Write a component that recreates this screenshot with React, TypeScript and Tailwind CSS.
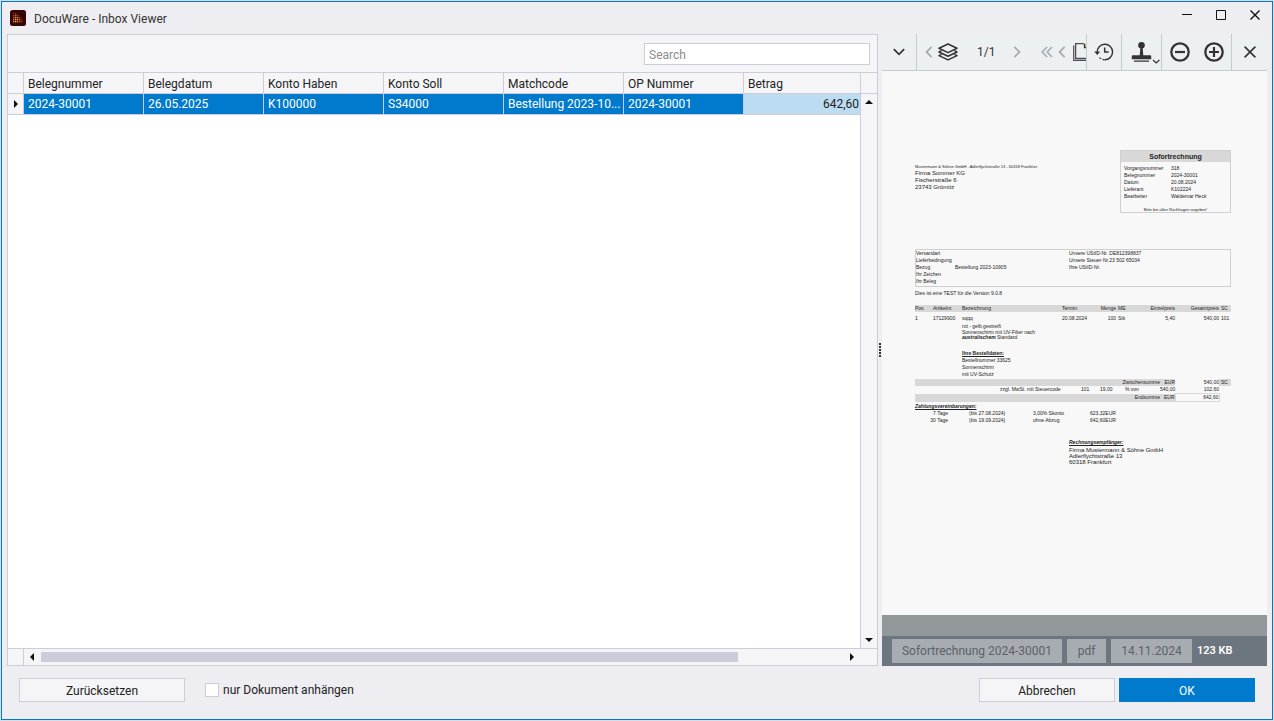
import React from "react";

const columns = ["Belegnummer", "Belegdatum", "Konto Haben", "Konto Soll", "Matchcode", "OP Nummer"];
const row = ["2024-30001", "26.05.2025", "K100000", "S34000", "Bestellung 2023-10...", "2024-30001"];

const meta = [
  ["Vorgangsnummer", "318"],
  ["Belegnummer", "2024-30001"],
  ["Datum", "20.08.2024"],
  ["Lieferant", "K102224"],
  ["Bearbeiter", "Waldemar Heck"],
];

const Logo = () => (
  <svg width="16" height="16" viewBox="0 0 16 16">
    <rect width="16" height="16" rx="2.5" fill="#360606" />
    {[
      [3, 3, "#7a2c10"], [5, 3, "#8f3a12"],
      [3, 5, "#a34a14"], [5, 5, "#d0701c"], [7, 5, "#a34a14"],
      [3, 7, "#b85a16"], [5, 7, "#f0a030"], [7, 7, "#e08a24"], [9, 7, "#a34a14"],
      [3, 9, "#d0701c"], [5, 9, "#f4b040"], [7, 9, "#f0a030"], [9, 9, "#c8681a"], [11, 9, "#7a2c10"],
      [3, 11, "#e08a24"], [5, 11, "#f0a030"], [7, 11, "#d0701c"], [9, 11, "#b85a16"], [11, 11, "#8f3a12"],
    ].map(([x, y, c]) => (
      <rect key={`${x}-${y}`} x={x} y={y} width="1.4" height="1.4" fill={c as string} />
    ))}
  </svg>
);

const TitleBar = () => (
  <header className="flex h-8 shrink-0 items-center pl-2 pr-3">
    <Logo />
    <h1 className="ml-2 flex-1 pt-px text-[12px] leading-4 text-[#333]">DocuWare - Inbox Viewer</h1>
    <div className="mb-1.5 flex gap-6">
      <button aria-label="Minimieren">
        <svg width="10" height="10" viewBox="0 0 10 10"><path d="M0 4.5h10" stroke="#111" /></svg>
      </button>
      <button aria-label="Maximieren">
        <svg width="10" height="10" viewBox="0 0 10 10"><path d="M.5.5h9v9h-9z" fill="none" stroke="#111" /></svg>
      </button>
      <button aria-label="Fenster schließen">
        <svg width="10" height="10" viewBox="0 0 10 10"><path d="M.5.5l9 9M9.500.5l-9 9" stroke="#111" strokeWidth="1.4" /></svg>
      </button>
    </div>
  </header>
);

const InboxList = () => (
  <section className="flex min-w-0 flex-1 flex-col border border-[#cccddb] bg-[#f5f5f7]">
    <div className="flex h-[37px] shrink-0 items-start justify-end pr-[7px] pt-2">
      <input
        type="text"
        aria-label="Search"
        placeholder="Search"
        className="h-[22px] w-[226px] border border-[#cccddb] bg-white px-1 pt-px text-[12px] text-[#222] placeholder-[#8c8c8c] outline-none"
      />
    </div>

    <div className="flex min-h-0 flex-1 border-t border-[#cccddb]">
      <div className="min-w-0 flex-1 bg-white">
        <table className="w-full table-fixed border-separate border-spacing-0 text-left text-[12px] leading-4">
          <colgroup>
            <col className="w-4" />
            {columns.map((c) => (
              <col key={c} className="w-[120px]" />
            ))}
            <col />
          </colgroup>
          <thead>
            <tr className="h-[21px] bg-[#f5f5f7] text-[#222]">
              <th className="border-b border-r border-[#cccddb] p-0" />
              {columns.map((c) => (
                <th key={c} className="border-b border-r border-[#cccddb] px-1 pb-0 pt-0.5 font-normal">{c}</th>
              ))}
              <th className="border-b border-[#cccddb] px-1 pb-0 pt-0.5 font-normal">Betrag</th>
            </tr>
          </thead>
          <tbody>
            <tr className="h-[21px] bg-[#007acc] text-white">
              <td className="border-b border-r border-[#cccddb] bg-[#f5f5f7] p-0">
                <svg className="ml-1.5" width="4" height="8" viewBox="0 0 4 8"><path d="M0 0l4 4-4 4z" fill="#111" /></svg>
              </td>
              {row.map((v, i) => (
                <td key={i} className="whitespace-nowrap border-b border-r border-[#cccddb] py-0 pl-1 pr-0">{v}</td>
              ))}
              <td className="border-b border-[#cccddb] bg-[#bcdcf1] px-px py-0 text-right text-[#222]">642,60</td>
            </tr>
          </tbody>
        </table>
      </div>

      {/* Vertical scrollbar */}
      <div className="flex w-[17px] shrink-0 flex-col items-center border-l border-[#cccddb]">
        <div className="h-[21px] w-full shrink-0 border-b border-[#cccddb]" />
        <button aria-label="Nach oben" className="mt-1.5 flex-1 self-center">
          <svg className="h-full" width="8" viewBox="0 0 8 4" preserveAspectRatio="xMidYMin"><path d="M0 4l4-4 4 4z" fill="#111" /></svg>
        </button>
        <button aria-label="Nach unten" className="mb-1.5">
          <svg width="8" height="4" viewBox="0 0 8 4"><path d="M0 0l4 4 4-4z" fill="#111" /></svg>
        </button>
      </div>
    </div>

    {/* Horizontal scrollbar */}
    <div className="flex h-[17px] shrink-0 border-t border-[#cccddb]">
      <div className="w-4 border-r border-[#cccddb]" />
      <div className="flex flex-1 items-center pl-1.5 pr-[23px]">
        <button aria-label="Nach links">
          <svg width="4" height="8" viewBox="0 0 4 8"><path d="M4 0L0 4l4 4z" fill="#111" /></svg>
        </button>
        <div className="ml-[7px] mr-2 flex-1">
          <div className="h-2.5 w-[87%] bg-[#cccddb]" />
        </div>
        <button aria-label="Nach rechts">
          <svg width="4" height="8" viewBox="0 0 4 8"><path d="M0 0l4 4-4 4z" fill="#111" /></svg>
        </button>
      </div>
    </div>
  </section>
);

const Splitter = () => (
  <div className="flex w-1 shrink-0 flex-col items-center justify-center gap-px">
    {[0, 1, 2, 3, 4].map((i) => (
      <span key={i} className="h-0.5 w-0.5 bg-[#333]" />
    ))}
  </div>
);

const group = "flex items-center border-r border-[#c3ccd2]";

const ViewerToolbar = () => (
  <div className="flex h-[37px] shrink-0 border-b border-[#c3ccd2] bg-[#ecf0f1] text-[#333]">
    <div className={`${group} w-[35px] justify-center`}>
      <button aria-label="Menü">
        <svg width="12" height="8" viewBox="0 0 12 8" fill="none" stroke="#333" strokeWidth="1.7"><path d="M.8 1.200L6 6.400l5.200-5.200" /></svg>
      </button>
    </div>
    <div className={`${group} w-[170px] overflow-hidden pl-2`}>
      <button aria-label="Vorheriges Dokument">
        <svg width="8" height="12" viewBox="0 0 8 12" fill="none" stroke="#a3adb3" strokeWidth="1.8"><path d="M6.600.8L1.500 6l5.100 5.200" /></svg>
      </button>
      <button aria-label="Dokumente" className="ml-[5px]">
        <svg width="20" height="18" viewBox="0 0 20 18" fill="none" stroke="#333" strokeWidth="1.5" strokeLinejoin="round">
          <path d="M10 1l9 4.300-9 4.300-9-4.300z" />
          <path d="M3.500 7.700L1 9l9 4.300L19 9l-2.500-1.300" />
          <path d="M3.500 11.300L1 12.600l9 4.300 9-4.300-2.500-1.300" />
        </svg>
      </button>
      <span className="ml-[19px] w-[18px] text-center text-[12px]">1/1</span>
      <button aria-label="Nächstes Dokument" className="ml-[18px]">
        <svg width="8" height="12" viewBox="0 0 8 12" fill="none" stroke="#a3adb3" strokeWidth="1.8"><path d="M1.400.8L6.500 6l-5.100 5.200" /></svg>
      </button>
      <button aria-label="Erste Seite" className="ml-5">
        <svg width="12" height="12" viewBox="0 0 12 12" fill="none" stroke="#a3adb3" strokeWidth="1.6"><path d="M6 1L1.200 6 6 11M11 1L6.200 6 11 11" /></svg>
      </button>
      <button aria-label="Vorherige Seite" className="ml-[5px]">
        <svg width="8" height="12" viewBox="0 0 8 12" fill="none" stroke="#a3adb3" strokeWidth="1.8"><path d="M6.600.8L1.500 6l5.100 5.200" /></svg>
      </button>
      <button aria-label="Seiten" className="ml-[7px] shrink-0">
        <svg width="16" height="18" viewBox="0 0 16 18" fill="none">
          <path d="M.7 2.500v14.800h13" stroke="#5a4668" strokeWidth="1.2" />
          <path d="M11 .7H2.600v14.800H16" stroke="#4b4f45" strokeWidth="1.3" />
          <path d="M11.500.700v3.800H16" stroke="#333" strokeWidth="1.3" />
          <path d="M12.500.5v3h3z" fill="#c58a3a" />
        </svg>
      </button>
    </div>
    <div className={`${group} w-[35px] justify-center`}>
      <button aria-label="Verlauf">
        <svg width="20" height="18" viewBox="0 0 20 18" fill="none" stroke="#333">
          <path d="M3.200 9.500A7.700 7.700 0 1 1 10.500 16.700" strokeWidth="1.400" />
          <path d="M10.500 16.700a7.700 7.700 0 0 1-5.500-2.500" strokeWidth="1.200" strokeDasharray="2 1.500" />
          <path d="M.2 8.500h6L3.200 12z" fill="#333" stroke="none" />
          <path d="M10.700 4.500V9h4" strokeWidth="1.500" />
        </svg>
      </button>
    </div>
    <div className={`${group} w-10 justify-end pr-px`}>
      <button aria-label="Stempel">
        <svg width="29" height="24" viewBox="0 0 29 24">
          <circle cx="10.500" cy="5.300" r="3.300" fill="#333" />
          <path d="M9.400 7h2.200l.7 8.500h-3.600zM1.800 15.300h17.400q1 0 1 1v3H.8v-3q0-1 1-1zM3 20.500h15v1.300H3z" fill="#333" />
          <path d="M22 20l3.200 3 3.200-3" fill="none" stroke="#333" strokeWidth="1.200" />
        </svg>
      </button>
    </div>
    <div className={`${group} w-[70px] justify-center gap-3.5`}>
      <button aria-label="Verkleinern">
        <svg width="20" height="20" viewBox="0 0 20 20" fill="none" stroke="#333"><circle cx="10" cy="10" r="8.700" strokeWidth="2.300" /><path d="M5 10h10" strokeWidth="2.200" /></svg>
      </button>
      <button aria-label="Vergrößern">
        <svg width="20" height="20" viewBox="0 0 20 20" fill="none" stroke="#333"><circle cx="10" cy="10" r="8.700" strokeWidth="2.300" /><path d="M5 10h10M10 5v10" strokeWidth="2.200" /></svg>
      </button>
    </div>
    <div className="flex flex-1 items-center justify-center">
      <button aria-label="Schließen">
        <svg width="12" height="12" viewBox="0 0 12 12" stroke="#333" strokeWidth="1.600"><path d="M.6.600l10.800 10.800M11.400.600L.6 11.400" /></svg>
      </button>
    </div>
  </div>
);

const Invoice = () => (
  <article className="flex-1 overflow-hidden bg-[#f8f8f8] pl-[33px] pr-[36px] pt-[79px] font-['Liberation_Sans',Arial,sans-serif] text-[5px] leading-[7px] text-[#222]">
    <div className="flex items-start justify-between">
      <div className="pt-[13px]">
        <p className="text-[4px] leading-[7px]">Mustermann &amp; Söhne GmbH - Adlerflychtstraße 13 - 60318 Frankfurt</p>
        <address className="text-[6px] leading-[7px] not-italic">
          Firma Sommer KG<br />
          Fischerstraße 6<br />
          23743 Grömitz
        </address>
      </div>
      <div className="h-[63px] w-[111px] border border-[#cfcfcf]">
        <h2 className="bg-[#d8d8d8] text-center text-[7px] font-bold leading-[11px]">Sofortrechnung</h2>
        <dl className="grid grid-cols-[47px_1fr] pl-[3px] pt-[3px]">
          {meta.map(([k, v]) => (
            <React.Fragment key={k}>
              <dt>{k}</dt>
              <dd>{v}</dd>
            </React.Fragment>
          ))}
        </dl>
        <p className="mt-[7px] text-center text-[4px] leading-[5px]">Bitte bei allen Rückfragen angeben!</p>
      </div>
    </div>

    <div className="mt-9 flex h-[38px] border border-[#cfcfcf]">
      <dl className="grid w-[153px] grid-cols-[39px_1fr] content-start">
        <dt>Versandart</dt><dd />
        <dt>Lieferbedingung</dt><dd />
        <dt>Bezug</dt><dd>Bestellung 2023-10905</dd>
        <dt>Ihr Zeichen</dt><dd />
        <dt>Ihr Beleg</dt><dd />
      </dl>
      <p>
        Unsere UStID-Nr. DE812398837<br />
        Unsere Steuer-Nr.23 502 65034<br />
        Ihre UStID-Nr.
      </p>
    </div>

    <p className="mt-[3px]">Dies ist eine TEST für die Version 9.0.8</p>

    <table className="mt-2 w-full table-fixed text-left">
      <colgroup>
        <col className="w-[18px]" />
        <col className="w-[29px]" />
        <col className="w-[100px]" />
        <col className="w-[35px]" />
        <col className="w-[19px]" />
        <col className="w-[14px]" />
        <col className="w-[45px]" />
        <col className="w-[44px]" />
        <col className="w-[12px]" />
      </colgroup>
      <thead>
        <tr className="bg-[#d8d8d8]">
          <th className="p-0 font-normal">Pos.</th>
          <th className="p-0 font-normal">Artikelnr.</th>
          <th className="p-0 font-normal">Bezeichnung</th>
          <th className="p-0 font-normal">Termin</th>
          <th className="p-0 text-right font-normal">Menge</th>
          <th className="p-0 pl-0.5 font-normal">ME</th>
          <th className="p-0 text-right font-normal">Einzelpreis</th>
          <th className="p-0 text-right font-normal">Gesamtpreis</th>
          <th className="p-0 pl-0.5 font-normal">SC</th>
        </tr>
      </thead>
      <tbody className="align-top">
        <tr>
          <td className="p-0 pt-[3px]">1</td>
          <td className="p-0 pt-[3px]">17129900</td>
          <td className="p-0 pt-[3px]">sqqq</td>
          <td className="p-0 pt-[3px]">20.08.2024</td>
          <td className="p-0 pt-[3px] text-right">100</td>
          <td className="p-0 pl-0.5 pt-[3px]">Stk</td>
          <td className="p-0 pt-[3px] text-right">5,40</td>
          <td className="p-0 pt-[3px] text-right">540,00</td>
          <td className="p-0 pl-0.5 pt-[3px]">101</td>
        </tr>
        <tr>
          <td colSpan={2} className="p-0" />
          <td colSpan={7} className="p-0">
            <p className="leading-[8px]">rot - gelb gestreift</p>
            <p className="leading-[5px]">Sonnenschirm mit UV-Filter nach</p>
            <p className="leading-[5px]"><b><i>australischem</i></b> Standard</p>
            <p className="mt-2.5 font-bold underline">Ihre Bestelldaten:</p>
            <p>Bestellnummer 33625</p>
            <p>Sonnenschirm</p>
            <p>mit UV-Schutz</p>
          </td>
        </tr>
      </tbody>
    </table>

    {/* Totals */}
    <table className="mt-px w-full table-fixed text-right">
      <colgroup>
        <col className="w-[166px]" />
        <col className="w-[19px]" />
        <col className="w-[25px]" />
        <col className="w-[35px]" />
        <col className="w-[15px]" />
        <col className="w-[44px]" />
        <col className="w-[12px]" />
      </colgroup>
      <tbody>
        <tr className="bg-[#d8d8d8]">
          <td colSpan={4} className="p-0">Zwischensumme</td>
          <td className="p-0">EUR</td>
          <td className="bg-[#f8f8f8] p-0">540,00</td>
          <td className="p-0 pl-0.5 text-left">SC</td>
        </tr>
        <tr>
          <td className="p-0 pl-[85px] text-left">zzgl. MwSt. mit Steuercode</td>
          <td className="p-0 text-left">101</td>
          <td className="p-0 text-left">19,00</td>
          <td className="p-0 text-left">% von</td>
          <td className="p-0">540,00</td>
          <td className="p-0">102,60</td>
          <td className="p-0" />
        </tr>
        <tr>
          <td colSpan={4} className="bg-[#d8d8d8] p-0">Endsumme</td>
          <td className="bg-[#d8d8d8] p-0">EUR</td>
          <td className="border border-[#d8d8d8] p-0">642,60</td>
          <td className="p-0" />
        </tr>
      </tbody>
    </table>

    <h3 className="mt-px font-bold italic underline">Zahlungsvereinbarungen:</h3>
    <div className="grid grid-cols-[33px_85px_57px_1fr]">
      <span className="text-right">7 Tage</span><span className="pl-[21px]">(bis 27.08.2024)</span><span>3,00% Skonto</span><span>623,32EUR</span>
      <span className="text-right">30 Tage</span><span className="pl-[21px]">(bis 19.09.2024)</span><span>ohne Abzug</span><span>642,60EUR</span>
    </div>

    <div className="ml-[154px] mt-[15px]">
      <h3 className="font-bold italic underline">Rechnungsempfänger:</h3>
      <address className="mt-px text-[6px] leading-[6px] not-italic">
        Firma Mustermann &amp; Söhne GmbH<br />
        Adlerflychtstraße 13<br />
        60318 Frankfurt
      </address>
    </div>
  </article>
);

const FileInfo = () => (
  <div className="shrink-0 border-t-[21px] border-[#929799] bg-[#6d767e]">
    <div className="flex h-[30px] items-center gap-[5px] pl-2.5 text-[12px] leading-6 text-[#5c6167]">
      <span className="w-[170px] bg-[#a7acb3] text-center">Sofortrechnung 2024-30001</span>
      <span className="w-[39px] bg-[#a7acb3] text-center">pdf</span>
      <span className="w-[81px] bg-[#a7acb3] text-center">14.11.2024</span>
      <span className="text-[11px] font-semibold text-white">123 KB</span>
    </div>
  </div>
);

const Footer = () => (
  <footer className="flex h-[53px] shrink-0 items-start px-3 pt-3 text-[12px] text-[#222]">
    <button className="h-6 w-[166px] border border-[#cccddb] bg-[#f5f5f7] pt-0.5">Zurücksetzen</button>
    <label className="ml-5 flex h-6 items-center gap-1">
      <input type="checkbox" className="h-3.5 w-3.5 appearance-none border border-[#cccddb] bg-white" />
      nur Dokument anhängen
    </label>
    <div className="ml-auto flex gap-1">
      <button className="h-6 w-[136px] border border-[#cccddb] bg-[#f5f5f7] pt-0.5">Abbrechen</button>
      <button className="h-6 w-[136px] bg-[#007acc] pt-0.5 text-white">OK</button>
    </div>
  </footer>
);

const App = () => {
  return (
    <div className="h-screen bg-[#dcdce2] p-px font-[Roboto,'Open_Sans',sans-serif]">
      <div className="flex h-full flex-col border border-[#007acc] bg-[#eeedf2]">
        <TitleBar />
        <main className="flex min-h-0 flex-1 px-[5px]">
          <InboxList />
          <Splitter />
          <section className="flex w-[385px] shrink-0 flex-col">
            <ViewerToolbar />
            <Invoice />
            <FileInfo />
          </section>
        </main>
        <div className="px-[5px]">
          <Footer />
        </div>
      </div>
    </div>
  );
};

export default App;
